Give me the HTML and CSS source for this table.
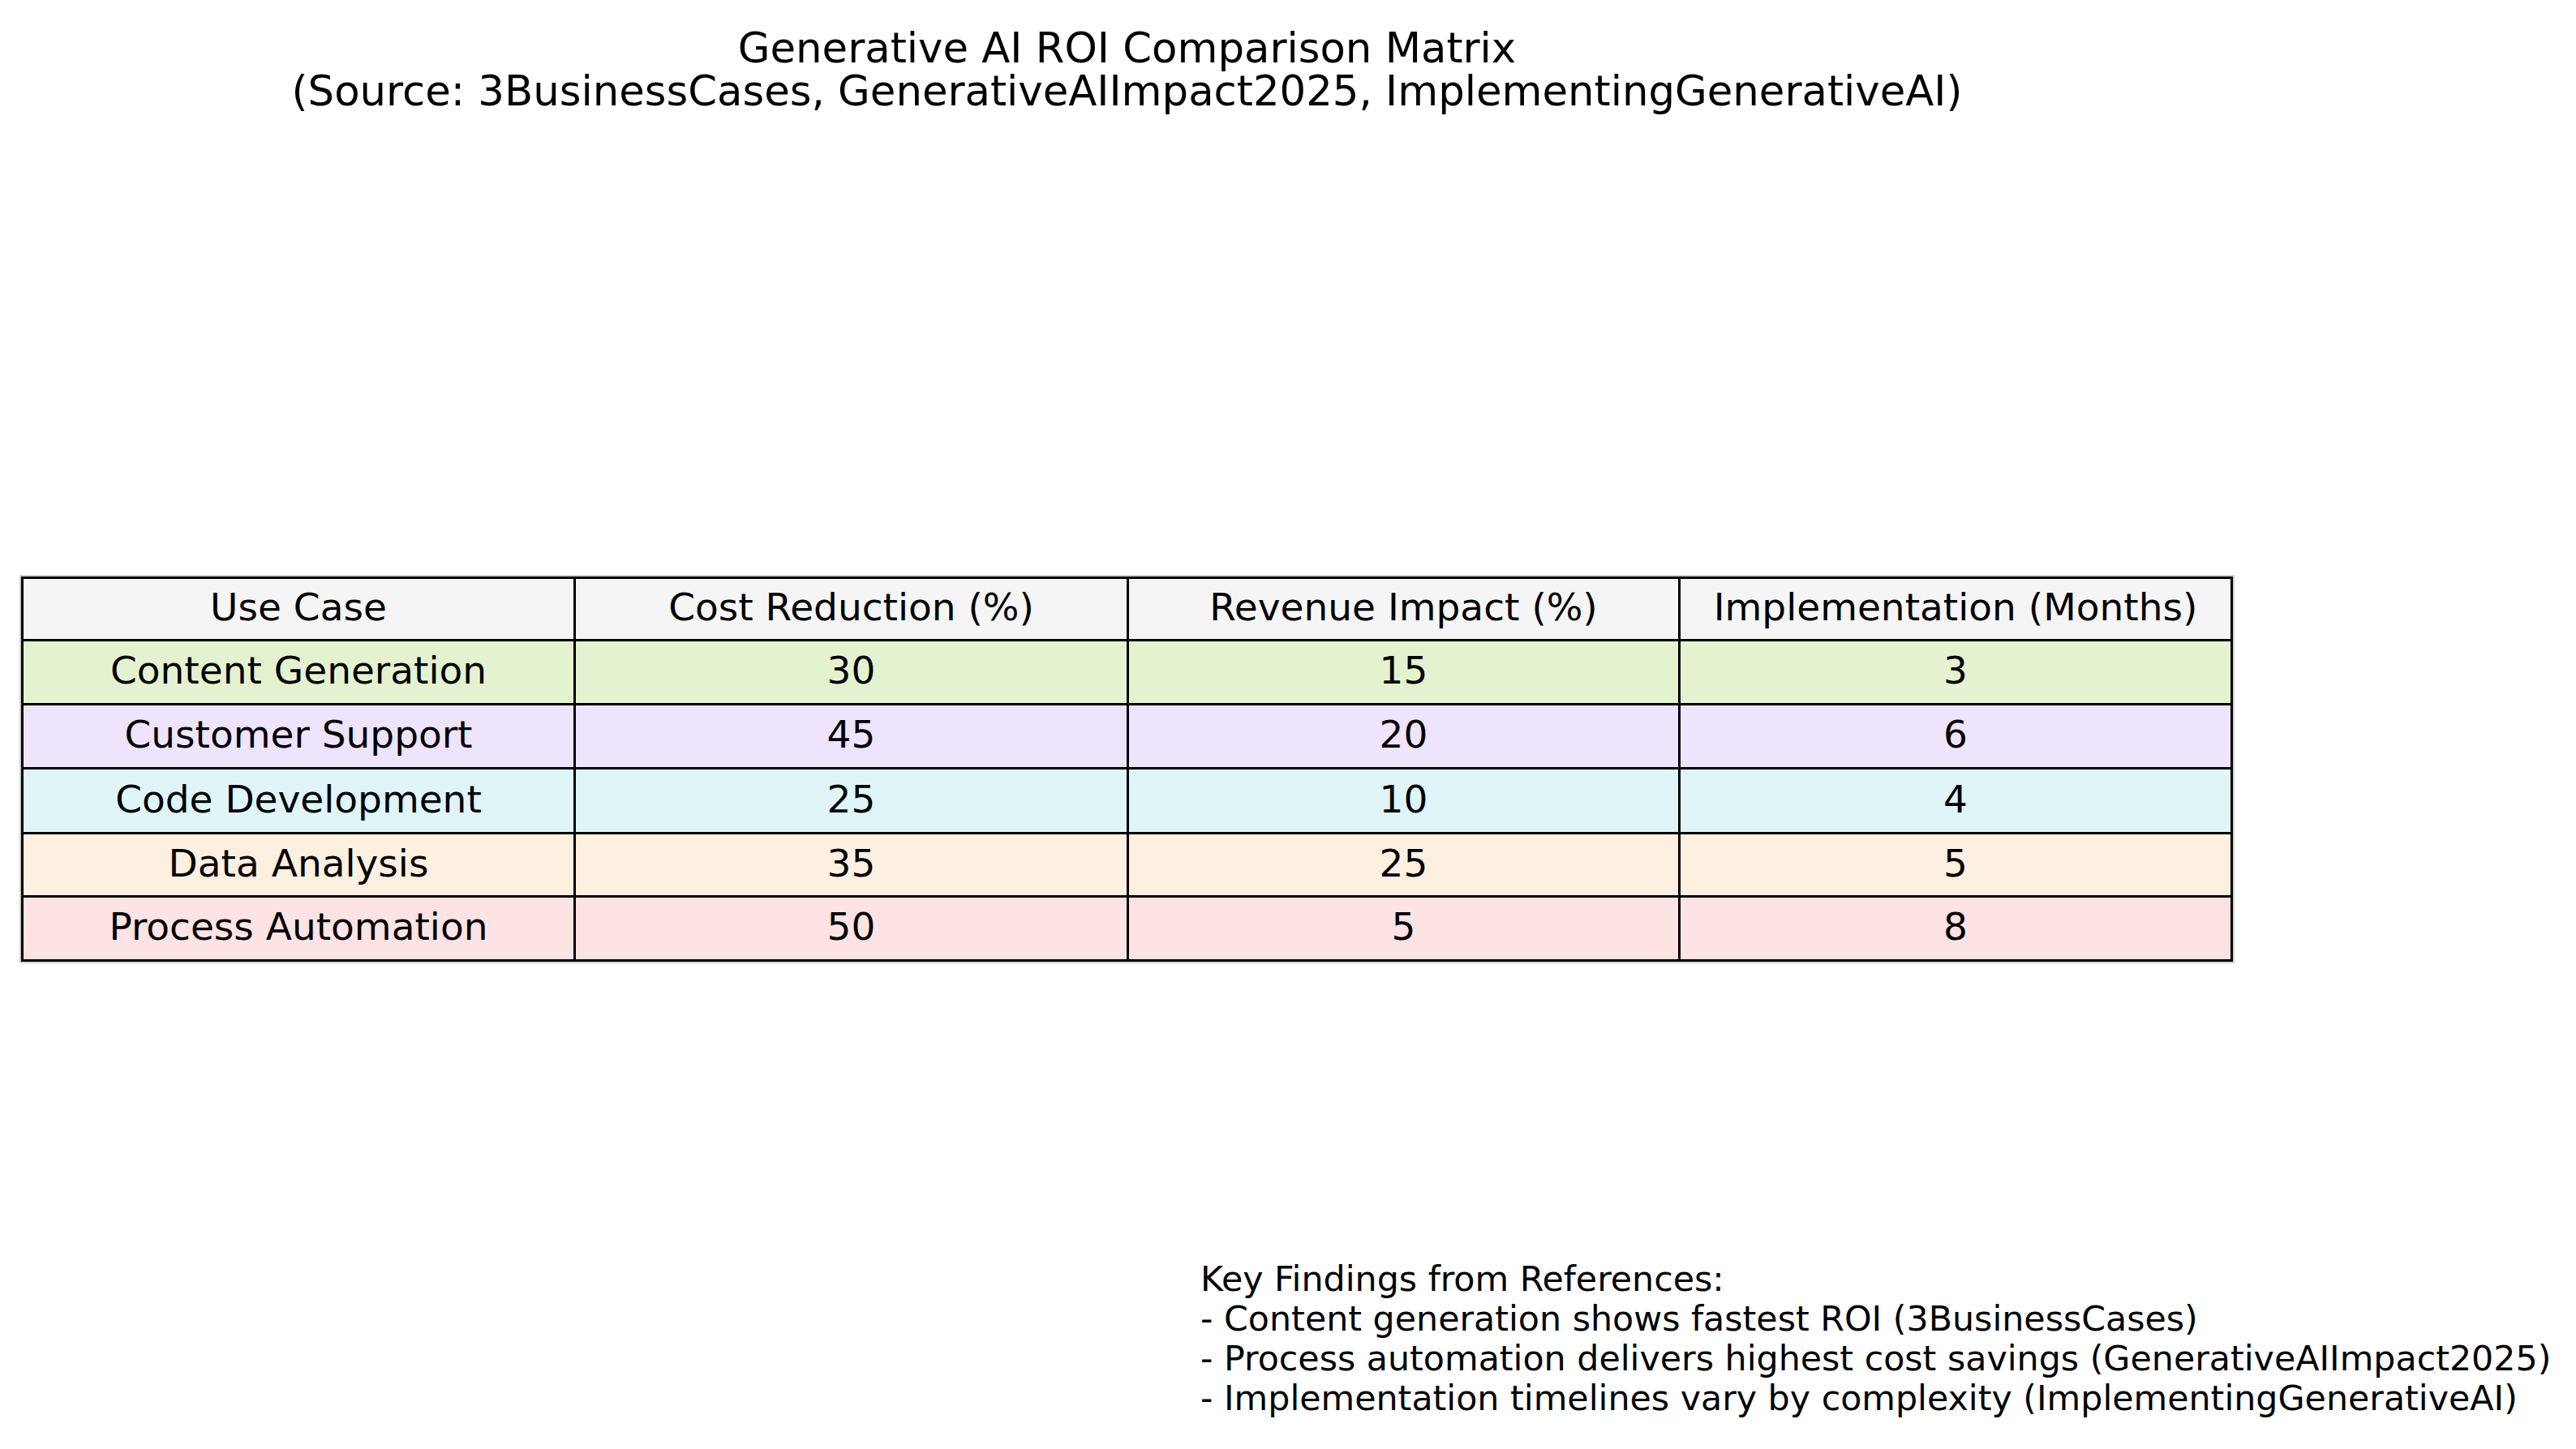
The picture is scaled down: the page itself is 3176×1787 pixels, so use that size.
FILE: index.html
```html
<!DOCTYPE html>
<html lang="en">
<head>
<meta charset="utf-8">
<title>Generative AI ROI Comparison Matrix</title>
<link rel="stylesheet" href="styles.css">
</head>
<body>
<div class="page">
  <div class="figure">
    <div class="title">Generative AI ROI Comparison Matrix<br>(Source: 3BusinessCases, GenerativeAIImpact2025, ImplementingGenerativeAI)</div>
    <div class="matrix">
      <div class="cell head">Use Case</div>
      <div class="cell head">Cost Reduction (%)</div>
      <div class="cell head">Revenue Impact (%)</div>
      <div class="cell head">Implementation (Months)</div>

      <div class="cell green">Content Generation</div>
      <div class="cell green">30</div>
      <div class="cell green">15</div>
      <div class="cell green">3</div>

      <div class="cell purple">Customer Support</div>
      <div class="cell purple">45</div>
      <div class="cell purple">20</div>
      <div class="cell purple">6</div>

      <div class="cell cyan">Code Development</div>
      <div class="cell cyan">25</div>
      <div class="cell cyan">10</div>
      <div class="cell cyan">4</div>

      <div class="cell orange">Data Analysis</div>
      <div class="cell orange">35</div>
      <div class="cell orange">25</div>
      <div class="cell orange">5</div>

      <div class="cell pink">Process Automation</div>
      <div class="cell pink">50</div>
      <div class="cell pink">5</div>
      <div class="cell pink">8</div>
    </div>
  </div>
  <div class="notes">
    <div>Key Findings from References:</div>
    <div>- Content generation shows fastest ROI (3BusinessCases)</div>
    <div>- Process automation delivers highest cost savings (GenerativeAIImpact2025)</div>
    <div>- Implementation timelines vary by complexity (ImplementingGenerativeAI)</div>
  </div>
</div>
</body>
</html>
```
FILE: styles.css
```css
html, body {
  margin: 0;
  padding: 0;
  background: #ffffff;
}
body {
  width: 3176px;
  height: 1787px;
  overflow: hidden;
  font-family: "DejaVu Sans", "Liberation Sans", sans-serif;
  color: #000;
}
.page {
  padding-top: 33px;
}
.figure {
  margin-left: 26px;
  width: 2727px;
}
.title {
  text-align: center;
  font-size: 51.3px;
  line-height: 53px;
  white-space: nowrap;
}
.matrix {
  margin-top: 572px;
  display: grid;
  grid-template-columns: 678px 679px 677px 678px;
  grid-template-rows: 74px 76px 76px 77px 75px 76px;
  gap: 3px;
  padding: 3px;
  background: #000;
  width: max-content;
  box-shadow: 0 0 0 2px #d0d0d0;
}
.cell {
  display: flex;
  align-items: center;
  justify-content: center;
  font-size: 47px;
  padding-bottom: 5px;
  box-sizing: border-box;
  white-space: nowrap;
}
.head { background: #f5f5f5; }
.green { background: #e4f2cf; }
.purple { background: #eee4fd; }
.cyan { background: #dff5f8; }
.orange { background: #fef0e0; }
.pink { background: #fde3e3; }
.notes {
  margin-top: 367px;
  padding-left: 1480px;
  font-size: 42.75px;
  line-height: 49px;
  white-space: nowrap;
}
```
